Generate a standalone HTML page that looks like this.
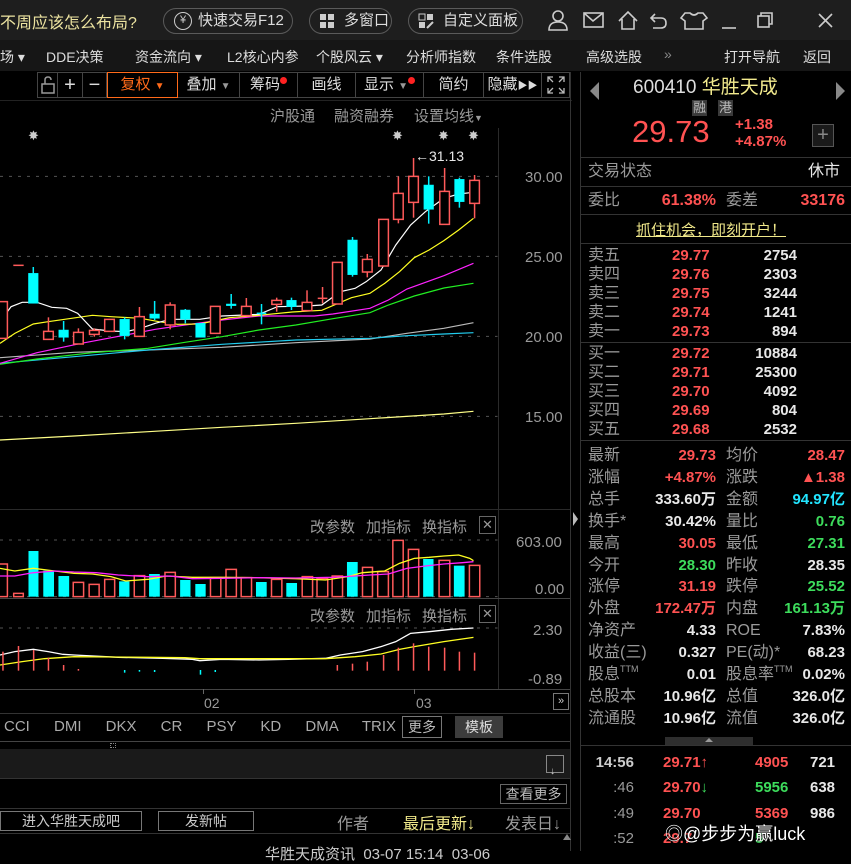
<!DOCTYPE html>
<html><head><meta charset="utf-8"><style>
*{margin:0;padding:0;box-sizing:border-box}
body{width:851px;height:851px;background:#000;overflow:hidden;position:relative;font-family:"Liberation Sans","Noto Sans CJK SC",sans-serif;color:#ddd;font-size:15px}
.a{position:absolute;white-space:nowrap}
.g{color:#9a9a9a}
.r{color:#ff5252}
.gr{color:#3ddc5c}
.w{color:#e8e8e8}
.b{font-weight:bold}
.pill{position:absolute;top:8px;height:26px;border:1px solid #5a5a5a;border-radius:13px;color:#ddd;font-size:15px;line-height:24px;padding-left:34px}
.tb{position:absolute;top:72px;height:26px;border:1px solid #444;border-left:none;color:#ddd;font-size:15px;line-height:24px;text-align:center}
.hl{position:absolute;height:1px;background:#333}
.lab{position:absolute;color:#9a9a9a;font-size:16px;line-height:20px}
.val{position:absolute;font-weight:bold;font-size:16px;line-height:20px;text-align:right}
.ttm{font-size:9px;line-height:0;position:relative;top:-7px}
</style></head><body>
<!-- top bar -->
<div class="a" style="left:0;top:0;width:851px;height:40px;background:#1e1e1e"></div>
<div class="a" style="left:0;top:9px;font-size:16px;color:#ece3a0">不周应该怎么布局?</div>
<div class="pill" style="left:163px;width:130px">快速交易F12</div>
<div class="a" style="left:174px;top:12px;width:18px;height:18px;border:1.5px solid #ccc;border-radius:50%;font-size:11px;line-height:15px;text-align:center;color:#ccc">¥</div>
<div class="pill" style="left:309px;width:83px">多窗口</div>
<svg class="a" style="left:319px;top:13px" width="17" height="16"><rect x="1" y="1" width="6" height="6" fill="#ccc"/><rect x="9" y="1" width="6" height="6" fill="#ccc"/><rect x="1" y="9" width="6" height="6" fill="#ccc"/><rect x="9" y="9" width="6" height="6" fill="#ccc"/></svg>
<div class="pill" style="left:408px;width:115px">自定义面板</div>
<svg class="a" style="left:418px;top:13px" width="17" height="16"><rect x="1" y="1" width="6" height="6" fill="none" stroke="#ccc"/><rect x="9" y="1" width="6" height="6" fill="#ccc"/><rect x="1" y="9" width="6" height="6" fill="#ccc"/><path d="M9 15 L15 9" stroke="#ccc" stroke-width="2"/></svg>
<svg class="a" style="left:545px;top:8px" width="300" height="26" fill="none" stroke="#ccc" stroke-width="1.6">
<circle cx="13" cy="8" r="5"/><path d="M4 22 Q4 14 13 14 Q22 14 22 22 Z"/>
<rect x="39" y="5" width="19" height="14"/><path d="M39 5 L48 13 L58 5"/>
<path d="M74 13 L83 4 L92 13 M77 11 V21 H89 V11"/>
<path d="M110 6 L106 10 L110 14 M106 10 H116 Q121 10 121 15 Q121 20 116 20 H108"/>
<path d="M140 5 L145 5 Q149 9 153 5 L158 5 L162 10 L158 13 V21 H140 V13 L136 10 Z"/>
<path d="M177 20 H191"/>
<rect x="213" y="8" width="11" height="11"/><path d="M216 8 V5 H227 V16 H224"/>
<path d="M274 6 L287 19 M287 6 L274 19"/>
</svg>
<!-- menu row -->
<div class="a" style="left:0;top:40px;width:851px;height:31px;background:#161616"></div>
<div class="a" style="left:0;top:47px;font-size:14px;color:#ddd">场 ▾</div>
<div class="a" style="left:46px;top:47px;font-size:14px">DDE决策</div>
<div class="a" style="left:135px;top:47px;font-size:14px">资金流向 ▾</div>
<div class="a" style="left:227px;top:47px;font-size:14px">L2核心内参</div>
<div class="a" style="left:316px;top:47px;font-size:14px">个股风云 ▾</div>
<div class="a" style="left:406px;top:47px;font-size:14px">分析师指数</div>
<div class="a" style="left:496px;top:47px;font-size:14px">条件选股</div>
<div class="a" style="left:586px;top:47px;font-size:14px">高级选股</div>
<div class="a" style="left:664px;top:46px;font-size:14px;color:#888">»</div>
<div class="a" style="left:724px;top:47px;font-size:14px">打开导航</div>
<div class="a" style="left:803px;top:47px;font-size:14px">返回</div>
<!-- toolbar -->
<div class="tb" style="left:37px;width:21px;border-left:1px solid #444"><svg width="16" height="20" style="margin-top:2px" fill="none" stroke="#999" stroke-width="1.5"><rect x="2" y="9" width="12" height="9"/><path d="M5 9 V5 Q5 2 8 2 Q11 2 11 5"/></svg></div>
<div class="tb" style="left:58px;width:25px;font-size:20px">+</div>
<div class="tb" style="left:83px;width:24px;font-size:20px">−</div>
<div class="tb" style="left:107px;width:71px;border:1px solid #ff6a1a;color:#ff6a1a">复权 <span style="font-size:10px">▼</span></div>
<div class="tb" style="left:178px;width:62px">叠加 <span style="font-size:10px;color:#999">▼</span></div>
<div class="tb" style="left:240px;width:58px">筹码<span style="display:inline-block;width:7px;height:7px;border-radius:50%;background:#f22;vertical-align:top;margin-top:4px"></span></div>
<div class="tb" style="left:298px;width:58px">画线</div>
<div class="tb" style="left:356px;width:68px">显示 <span style="font-size:10px;color:#999">▼</span><span style="display:inline-block;width:7px;height:7px;border-radius:50%;background:#f22;vertical-align:top;margin-top:4px"></span></div>
<div class="tb" style="left:424px;width:60px">简约</div>
<div class="tb" style="left:484px;width:58px">隐藏<span style="font-size:10px">▶▶</span></div>
<div class="tb" style="left:542px;width:28px"><svg width="18" height="18" style="margin-top:3px" fill="none" stroke="#bbb" stroke-width="1.3"><path d="M1 6 V1 H6 M12 1 H17 V6 M17 12 V17 H12 M6 17 H1 V12 M1 1 L6 6 M17 1 L12 6 M17 17 L12 12 M1 17 L6 12"/></svg></div>
<div class="hl" style="left:0;top:100px;width:572px;background:#222"></div>
<div class="a g" style="left:270px;top:105px;font-size:15px">沪股通</div>
<div class="a g" style="left:334px;top:105px;font-size:15px">融资融券</div>
<div class="a g" style="left:414px;top:105px;font-size:15px">设置均线<span style="font-size:9px">▼</span></div>
<!-- separators -->
<div class="a" style="left:498px;top:128px;width:1px;height:562px;background:#2a2a2a"></div>
<div class="a" style="left:570px;top:72px;width:1px;height:779px;background:#333"></div>
<div class="a" style="left:580px;top:72px;width:1px;height:779px;background:#333"></div>
<div class="a" style="left:573px;top:512px;width:0;height:0;border-left:5px solid #bbb;border-top:7px solid transparent;border-bottom:7px solid transparent"></div>
<!-- price axis labels -->
<div class="a g" style="left:525px;top:169px;font-size:15px">30.00</div>
<div class="a g" style="left:525px;top:249px;font-size:15px">25.00</div>
<div class="a g" style="left:525px;top:329px;font-size:15px">20.00</div>
<div class="a g" style="left:525px;top:409px;font-size:15px">15.00</div>
<!-- main chart -->
<svg class="a" style="left:0;top:130px" width="580" height="320" viewBox="0 0 1568 960" preserveAspectRatio="none">
<g stroke="#555" stroke-dasharray="3,6"><line x1="0" y1="139" x2="1345" y2="139" vector-effect="non-scaling-stroke"/><line x1="0" y1="379" x2="1345" y2="379" vector-effect="non-scaling-stroke"/><line x1="0" y1="619" x2="1345" y2="619" vector-effect="non-scaling-stroke"/><line x1="0" y1="859" x2="1345" y2="859" vector-effect="non-scaling-stroke"/></g>
<g fill="none" stroke-width="1.2">
<polyline vector-effect="non-scaling-stroke" stroke="#ffff88" points="0,930 200,918 400,905 600,892 800,880 1000,866 1200,852 1280,844"/>
<polyline vector-effect="non-scaling-stroke" stroke="#bbb" points="0,683 200,667 400,660 600,652 800,638 1000,627 1100,610 1200,595 1280,578"/>
<polyline vector-effect="non-scaling-stroke" stroke="#22ccee" points="0,700 200,680 400,660 600,643 800,630 1000,625 1100,617 1200,612 1280,608"/>
<polyline vector-effect="non-scaling-stroke" stroke="#22ee22" points="0,703 100,687 250,668 400,655 500,637 600,620 700,600 800,585 900,566 1000,548 1050,525 1120,498 1200,474 1280,460"/>
<polyline vector-effect="non-scaling-stroke" stroke="#ff22ff" points="0,700 100,668 220,640 330,617 420,598 500,585 600,570 700,558 850,558 900,552 1000,535 1050,510 1100,477 1200,437 1280,400"/>
<polyline vector-effect="non-scaling-stroke" stroke="#ffff22" points="0,640 40,610 90,582 130,575 250,556 300,560 380,565 430,575 480,583 540,582 620,563 700,556 790,546 870,541 950,503 1000,490 1040,460 1080,425 1120,383 1160,360 1200,332 1240,300 1280,265"/>
<polyline vector-effect="non-scaling-stroke" stroke="#fff" points="0,575 30,530 60,517 100,517 140,532 180,535 210,550 250,597 300,603 340,605 380,595 420,580 460,568 540,568 600,558 700,553 750,530 830,528 870,525 920,485 960,475 990,455 1030,420 1070,345 1110,285 1150,245 1200,205 1240,192 1280,187"/>
</g>
<g stroke="#ff5a5a" fill="#000" stroke-width="1.5">
<rect vector-effect="non-scaling-stroke" x="-6" y="515" width="26" height="110"/>
<line vector-effect="non-scaling-stroke" x1="36" y1="406" x2="64" y2="406"/>
<line vector-effect="non-scaling-stroke" x1="131" y1="562" x2="131" y2="604"/><rect vector-effect="non-scaling-stroke" x="118" y="604" width="26" height="24"/>
<line vector-effect="non-scaling-stroke" x1="212" y1="595" x2="212" y2="607"/><rect vector-effect="non-scaling-stroke" x="199" y="607" width="26" height="35"/>
<line vector-effect="non-scaling-stroke" x1="255" y1="595" x2="255" y2="620"/><rect vector-effect="non-scaling-stroke" x="242" y="601" width="26" height="12"/>
<rect vector-effect="non-scaling-stroke" x="283" y="568" width="26" height="36"/>
<line vector-effect="non-scaling-stroke" x1="377" y1="531" x2="377" y2="560"/><rect vector-effect="non-scaling-stroke" x="364" y="560" width="26" height="59"/>
<line vector-effect="non-scaling-stroke" x1="460" y1="517" x2="460" y2="598"/><rect vector-effect="non-scaling-stroke" x="447" y="525" width="26" height="60"/>
<rect vector-effect="non-scaling-stroke" x="569" y="529" width="26" height="81"/>
<line vector-effect="non-scaling-stroke" x1="666" y1="504" x2="666" y2="529"/><rect vector-effect="non-scaling-stroke" x="653" y="529" width="26" height="28"/>
<line vector-effect="non-scaling-stroke" x1="748" y1="503" x2="748" y2="545"/><rect vector-effect="non-scaling-stroke" x="735" y="511" width="26" height="12"/>
<line vector-effect="non-scaling-stroke" x1="830" y1="481" x2="830" y2="517"/><rect vector-effect="non-scaling-stroke" x="817" y="517" width="26" height="25"/>
<line vector-effect="non-scaling-stroke" x1="872" y1="471" x2="872" y2="520"/><line vector-effect="non-scaling-stroke" x1="859" y1="505" x2="885" y2="505"/>
<rect vector-effect="non-scaling-stroke" x="899" y="397" width="26" height="125"/>
<line vector-effect="non-scaling-stroke" x1="993" y1="372" x2="993" y2="442"/><rect vector-effect="non-scaling-stroke" x="980" y="388" width="26" height="38"/>
<rect vector-effect="non-scaling-stroke" x="1024" y="268" width="26" height="140"/>
<line vector-effect="non-scaling-stroke" x1="1077" y1="139" x2="1077" y2="280"/><rect vector-effect="non-scaling-stroke" x="1064" y="190" width="26" height="78"/>
<line vector-effect="non-scaling-stroke" x1="1118" y1="84" x2="1118" y2="263"/><rect vector-effect="non-scaling-stroke" x="1105" y="139" width="26" height="78"/>
<line vector-effect="non-scaling-stroke" x1="1202" y1="114" x2="1202" y2="283"/><rect vector-effect="non-scaling-stroke" x="1189" y="184" width="26" height="99"/>
<line vector-effect="non-scaling-stroke" x1="1283" y1="135" x2="1283" y2="265"/><rect vector-effect="non-scaling-stroke" x="1270" y="151" width="26" height="69"/>
</g>
<g stroke="#00f0ff" fill="#00ffff" stroke-width="1.5">
<line vector-effect="non-scaling-stroke" x1="90" y1="411" x2="90" y2="520"/><rect x="77" y="430" width="26" height="90"/>
<line vector-effect="non-scaling-stroke" x1="172" y1="573" x2="172" y2="635"/><rect x="159" y="600" width="26" height="22"/>
<line vector-effect="non-scaling-stroke" x1="337" y1="562" x2="337" y2="628"/><rect x="324" y="568" width="26" height="49"/>
<line vector-effect="non-scaling-stroke" x1="418" y1="513" x2="418" y2="570"/><rect x="405" y="552" width="26" height="13"/>
<line vector-effect="non-scaling-stroke" x1="501" y1="537" x2="501" y2="580"/><rect x="488" y="540" width="26" height="28"/>
<rect x="529" y="580" width="26" height="42"/>
<line vector-effect="non-scaling-stroke" x1="625" y1="492" x2="625" y2="536"/><rect x="612" y="522" width="26" height="5"/>
<line vector-effect="non-scaling-stroke" x1="707" y1="522" x2="707" y2="583"/><line vector-effect="non-scaling-stroke" x1="694" y1="550" x2="720" y2="550"/>
<line vector-effect="non-scaling-stroke" x1="788" y1="503" x2="788" y2="540"/><rect x="775" y="511" width="26" height="19"/>
<line vector-effect="non-scaling-stroke" x1="953" y1="321" x2="953" y2="440"/><rect x="940" y="330" width="26" height="104"/>
<line vector-effect="non-scaling-stroke" x1="1159" y1="139" x2="1159" y2="281"/><rect x="1146" y="165" width="26" height="73"/>
<line vector-effect="non-scaling-stroke" x1="1242" y1="143" x2="1242" y2="233"/><rect x="1229" y="148" width="26" height="67"/>
</g>
</svg>
<div class="a" style="left:28px;top:128px;color:#ccc;font-size:13px">✸</div>
<div class="a" style="left:392px;top:128px;color:#ccc;font-size:13px">✸</div>
<div class="a" style="left:438px;top:128px;color:#ccc;font-size:13px">✸</div>
<div class="a" style="left:468px;top:128px;color:#ccc;font-size:13px">✸</div>
<div class="a w" style="left:415px;top:148px;font-size:14px">←31.13</div>
<!-- volume -->
<div class="hl" style="left:0;top:509px;width:570px;background:#2a2a2a"></div>
<div class="a g" style="left:310px;top:516px;font-size:15px">改参数</div>
<div class="a g" style="left:366px;top:516px;font-size:15px">加指标</div>
<div class="a g" style="left:422px;top:516px;font-size:15px">换指标</div>
<div class="a" style="left:479px;top:516px;width:17px;height:18px;border:1px solid #666;color:#999;font-size:13px;line-height:16px;text-align:center">✕</div>
<div class="a g" style="left:516px;top:534px;font-size:15px">603.00</div>
<div class="a g" style="left:535px;top:581px;font-size:15px">0.00</div>
<div class="hl" style="left:0;top:598px;width:570px;background:#444"></div>
<div class="a g" style="left:310px;top:605px;font-size:15px">改参数</div>
<div class="a g" style="left:366px;top:605px;font-size:15px">加指标</div>
<div class="a g" style="left:422px;top:605px;font-size:15px">换指标</div>
<div class="a" style="left:479px;top:605px;width:17px;height:18px;border:1px solid #666;color:#999;font-size:13px;line-height:16px;text-align:center">✕</div>
<div class="a g" style="left:533px;top:622px;font-size:15px">2.30</div>
<div class="a g" style="left:528px;top:671px;font-size:15px">-0.89</div>
<svg class="a" style="left:0;top:500px" width="580" height="200" viewBox="0 0 1568 600" preserveAspectRatio="none">
<g stroke="#555" stroke-dasharray="3,6"><line vector-effect="non-scaling-stroke" x1="0" y1="120" x2="1345" y2="120"/><line vector-effect="non-scaling-stroke" x1="0" y1="290" x2="1345" y2="290"/><line vector-effect="non-scaling-stroke" x1="0" y1="384" x2="1345" y2="384"/></g>
<g fill="#000" stroke="#ff5a5a" stroke-width="1.5">
<rect vector-effect="non-scaling-stroke" x="-5" y="192" width="25" height="98"/>
<rect vector-effect="non-scaling-stroke" x="37" y="280" width="26" height="10"/>
<rect vector-effect="non-scaling-stroke" x="198" y="247" width="28" height="43"/>
<rect vector-effect="non-scaling-stroke" x="241" y="253" width="27" height="37"/>
<rect vector-effect="non-scaling-stroke" x="283" y="238" width="27" height="52"/>
<rect vector-effect="non-scaling-stroke" x="363" y="227" width="28" height="63"/>
<rect vector-effect="non-scaling-stroke" x="446" y="217" width="28" height="73"/>
<rect vector-effect="non-scaling-stroke" x="569" y="233" width="28" height="57"/>
<rect vector-effect="non-scaling-stroke" x="611" y="208" width="28" height="82"/>
<rect vector-effect="non-scaling-stroke" x="652" y="233" width="28" height="57"/>
<rect vector-effect="non-scaling-stroke" x="734" y="238" width="28" height="52"/>
<rect vector-effect="non-scaling-stroke" x="817" y="230" width="28" height="60"/>
<rect vector-effect="non-scaling-stroke" x="857" y="236" width="29" height="54"/>
<rect vector-effect="non-scaling-stroke" x="898" y="228" width="28" height="62"/>
<rect vector-effect="non-scaling-stroke" x="980" y="202" width="27" height="88"/>
<rect vector-effect="non-scaling-stroke" x="1021" y="215" width="29" height="75"/>
<rect vector-effect="non-scaling-stroke" x="1062" y="121" width="28" height="169"/>
<rect vector-effect="non-scaling-stroke" x="1104" y="148" width="28" height="142"/>
<rect vector-effect="non-scaling-stroke" x="1187" y="181" width="29" height="109"/>
<rect vector-effect="non-scaling-stroke" x="1269" y="196" width="28" height="94"/>
</g>
<g fill="#00ffff">
<rect x="77" y="153" width="27" height="137"/><rect x="117" y="212" width="29" height="78"/><rect x="158" y="228" width="29" height="62"/>
<rect x="322" y="244" width="28" height="46"/><rect x="403" y="222" width="29" height="68"/><rect x="487" y="240" width="28" height="50"/>
<rect x="528" y="252" width="28" height="38"/><rect x="692" y="246" width="29" height="44"/><rect x="774" y="249" width="29" height="41"/>
<rect x="938" y="186" width="29" height="104"/><rect x="1144" y="177" width="28" height="113"/><rect x="1227" y="197" width="29" height="93"/>
</g>
<g fill="none" stroke-width="1.3">
<polyline vector-effect="non-scaling-stroke" stroke="#ffff22" points="0,205 40,213 90,205 140,212 200,220 250,222 300,230 340,243 400,238 450,228 520,232 600,232 700,233 800,236 880,240 940,230 980,218 1040,213 1080,190 1120,175 1160,172 1200,168 1240,165 1270,175 1280,182"/>
<polyline vector-effect="non-scaling-stroke" stroke="#ff22ff" points="0,228 40,228 90,218 150,213 200,216 260,218 320,225 400,230 460,228 520,236 600,235 700,233 800,234 900,232 960,228 1000,225 1050,222 1100,205 1150,198 1200,192 1250,188 1280,185"/>
<polyline vector-effect="non-scaling-stroke" stroke="#fff" points="0,465 40,455 90,448 130,455 170,463 200,465 320,472 440,475 520,478 540,482 600,478 700,480 780,478 880,475 920,465 980,455 1030,440 1070,425 1110,400 1160,395 1220,388 1280,384"/>
<polyline vector-effect="non-scaling-stroke" stroke="#ffff22" points="0,495 60,485 120,476 200,470 300,471 400,472 500,473 540,476 700,476 880,476 960,470 1030,462 1080,448 1120,440 1200,425 1280,412"/>
</g>
<g stroke="#ff5a5a" stroke-width="1.5">
<line vector-effect="non-scaling-stroke" x1="8" y1="455" x2="8" y2="512"/><line vector-effect="non-scaling-stroke" x1="50" y1="438" x2="50" y2="512"/><line vector-effect="non-scaling-stroke" x1="91" y1="450" x2="91" y2="512"/><line vector-effect="non-scaling-stroke" x1="131" y1="473" x2="131" y2="512"/><line vector-effect="non-scaling-stroke" x1="172" y1="495" x2="172" y2="512"/><line vector-effect="non-scaling-stroke" x1="212" y1="507" x2="212" y2="512"/>
<line vector-effect="non-scaling-stroke" x1="912" y1="495" x2="912" y2="512"/><line vector-effect="non-scaling-stroke" x1="953" y1="491" x2="953" y2="512"/><line vector-effect="non-scaling-stroke" x1="993" y1="485" x2="993" y2="512"/><line vector-effect="non-scaling-stroke" x1="1037" y1="465" x2="1037" y2="512"/><line vector-effect="non-scaling-stroke" x1="1077" y1="443" x2="1077" y2="512"/><line vector-effect="non-scaling-stroke" x1="1118" y1="430" x2="1118" y2="512"/><line vector-effect="non-scaling-stroke" x1="1159" y1="440" x2="1159" y2="512"/><line vector-effect="non-scaling-stroke" x1="1202" y1="443" x2="1202" y2="512"/><line vector-effect="non-scaling-stroke" x1="1242" y1="455" x2="1242" y2="512"/><line vector-effect="non-scaling-stroke" x1="1283" y1="458" x2="1283" y2="512"/>
</g>
<g stroke="#00ffff" stroke-width="1.5"><line vector-effect="non-scaling-stroke" x1="337" y1="510" x2="337" y2="518"/><line vector-effect="non-scaling-stroke" x1="377" y1="510" x2="377" y2="515"/><line vector-effect="non-scaling-stroke" x1="418" y1="510" x2="418" y2="516"/><line vector-effect="non-scaling-stroke" x1="542" y1="510" x2="542" y2="524"/><line vector-effect="non-scaling-stroke" x1="582" y1="510" x2="582" y2="516"/></g>
</svg>
<div class="hl" style="left:0;top:689px;width:570px;background:#444"></div>
<div class="a" style="left:203px;top:689px;width:1px;height:5px;background:#666"></div>
<div class="a" style="left:414px;top:689px;width:1px;height:5px;background:#666"></div>
<div class="a g" style="left:204px;top:695px;font-size:14px">02</div>
<div class="a g" style="left:416px;top:695px;font-size:14px">03</div>
<div class="a" style="left:553px;top:693px;width:16px;height:17px;border:1px solid #777;color:#ccc;font-size:11px;line-height:14px;text-align:center">»</div>
<div class="hl" style="left:0;top:713px;width:570px;background:#333"></div>
<!-- indicator tabs -->
<div class="a g" style="left:4px;top:718px;font-size:15px;color:#aaa;word-spacing:20px">CCI DMI DKX CR PSY KD DMA TRIX</div>
<div class="a" style="left:402px;top:716px;width:40px;height:22px;border:1px solid #777;color:#bbb;font-size:14px;line-height:20px;text-align:center">更多</div>
<div class="a" style="left:455px;top:716px;width:48px;height:22px;background:#3c3c3c;color:#ddd;font-size:14px;line-height:22px;text-align:center">模板</div>
<div class="hl" style="left:0;top:741px;width:570px;background:#444"></div>
<div class="a" style="left:110px;top:743px;width:6px;height:5px;border:1px dotted #888"></div>
<div class="a" style="left:0;top:749px;width:570px;height:29px;background:#1a1a1a"></div>
<div class="a" style="left:546px;top:755px;width:18px;height:18px;border:1px solid #888"></div>
<div class="a" style="left:550px;top:766px;color:#ccc;font-size:10px">↓</div>
<div class="hl" style="left:0;top:778px;width:570px;background:#333"></div>
<div class="a" style="left:500px;top:784px;width:67px;height:20px;border:1px solid #666;color:#bbb;font-size:14px;line-height:18px;text-align:center">查看更多</div>
<div class="hl" style="left:0;top:808px;width:570px;background:#333"></div>
<div class="a" style="left:0;top:811px;width:142px;height:20px;border:1px solid #777;color:#ccc;font-size:14px;line-height:18px;text-align:center">进入华胜天成吧</div>
<div class="a" style="left:158px;top:811px;width:96px;height:20px;border:1px solid #777;color:#ccc;font-size:14px;line-height:18px;text-align:center">发新帖</div>
<div class="a g" style="left:337px;top:810px;font-size:16px">作者</div>
<div class="a" style="left:403px;top:810px;font-size:16px;color:#f0e88a">最后更新↓</div>
<div class="a g" style="left:505px;top:810px;font-size:16px">发表日↓</div>
<div class="hl" style="left:0;top:833px;width:570px;background:#333"></div>
<div class="a" style="left:265px;top:843px;font-size:15px;color:#ccc">华胜天成资讯&nbsp; 03-07 15:14&nbsp; 03-06</div>
<div class="a" style="left:563px;top:834px;width:0;height:0;border-bottom:6px solid #888;border-left:4px solid transparent;border-right:4px solid transparent"></div>
<!-- right panel -->
<div class="a" style="left:590px;top:82px;width:0;height:0;border-right:9px solid #888;border-top:9px solid transparent;border-bottom:9px solid transparent"></div>
<div class="a" style="left:836px;top:82px;width:0;height:0;border-left:9px solid #888;border-top:9px solid transparent;border-bottom:9px solid transparent"></div>
<div class="a" style="left:633px;top:72px;font-size:19px;color:#ddd">600410 <span style="color:#f3eb8e">华胜天成</span></div>
<div class="a" style="left:692px;top:100px;width:15px;height:16px;background:#3a3a3a;color:#bbb;font-size:13px;line-height:16px;text-align:center">融</div>
<div class="a" style="left:718px;top:100px;width:15px;height:16px;background:#3a3a3a;color:#bbb;font-size:13px;line-height:16px;text-align:center">港</div>
<div class="a r" style="left:632px;top:114px;font-size:31px">29.73</div>
<div class="a r b" style="left:735px;top:116px;font-size:15px;line-height:17px">+1.38<br>+4.87%</div>
<div class="a" style="left:812px;top:124px;width:22px;height:23px;border:1px solid #555;background:#1a1a1a;color:#888;font-size:20px;line-height:20px;text-align:center">+</div>
<div class="hl" style="left:581px;top:157px;width:270px"></div>
<div class="lab" style="left:588px;top:162px">交易状态</div>
<div class="a w" style="left:808px;top:162px;font-size:16px;line-height:20px">休市</div>
<div class="hl" style="left:581px;top:186px;width:270px"></div>
<div class="lab" style="left:588px;top:191px">委比</div>
<div class="val r" style="left:640px;top:191px;width:76px">61.38%</div>
<div class="lab" style="left:726px;top:191px">委差</div>
<div class="val r" style="left:780px;top:191px;width:65px">33176</div>
<div class="hl" style="left:581px;top:214px;width:270px"></div>
<div class="a" style="left:636px;top:219px;font-size:15px;color:#f0e88a;text-decoration:underline">抓住机会，即刻开户！</div>
<div class="hl" style="left:581px;top:243px;width:270px"></div>
<div class="a" style="left:588px;top:246px;color:#9a9a9a;font-size:16px;line-height:19px">卖五<br>卖四<br>卖三<br>卖二<br>卖一</div>
<div class="a r b" style="left:672px;top:246px;font-size:15px;line-height:19px">29.77<br>29.76<br>29.75<br>29.74<br>29.73</div>
<div class="a w b" style="left:730px;top:246px;width:67px;text-align:right;font-size:15px;line-height:19px">2754<br>2303<br>3244<br>1241<br>894</div>
<div class="hl" style="left:581px;top:342px;width:270px"></div>
<div class="a" style="left:588px;top:344px;color:#9a9a9a;font-size:16px;line-height:19px">买一<br>买二<br>买三<br>买四<br>买五</div>
<div class="a r b" style="left:672px;top:344px;font-size:15px;line-height:19px">29.72<br>29.71<br>29.70<br>29.69<br>29.68</div>
<div class="a w b" style="left:730px;top:344px;width:67px;text-align:right;font-size:15px;line-height:19px">10884<br>25300<br>4092<br>804<br>2532</div>
<div class="hl" style="left:581px;top:440px;width:270px"></div>
<div class="a" style="left:588px;top:445px;color:#9a9a9a;font-size:16px;line-height:21.9px">最新<br>涨幅<br>总手<br>换手*<br>最高<br>今开<br>涨停<br>外盘<br>净资产<br>收益(三)<br>股息<span class="ttm">TTM</span><br>总股本<br>流通股</div>
<div class="a" style="left:640px;top:445px;width:76px;text-align:right;font-weight:bold;font-size:15px;line-height:21.9px"><span class="r">29.73</span><br><span class="r">+4.87%</span><br><span class="w">333.60万</span><br><span class="w">30.42%</span><br><span class="r">30.05</span><br><span class="gr">28.30</span><br><span class="r">31.19</span><br><span class="r">172.47万</span><br><span class="w">4.33</span><br><span class="w">0.327</span><br><span class="w">0.01</span><br><span class="w">10.96亿</span><br><span class="w">10.96亿</span></div>
<div class="a" style="left:726px;top:445px;color:#9a9a9a;font-size:16px;line-height:21.9px">均价<br>涨跌<br>金额<br>量比<br>最低<br>昨收<br>跌停<br>内盘<br>ROE<br>PE(动)*<br>股息率<span class="ttm">TTM</span><br>总值<br>流值</div>
<div class="a" style="left:760px;top:445px;width:85px;text-align:right;font-weight:bold;font-size:15px;line-height:21.9px"><span class="r">28.47</span><br><span class="r">▲1.38</span><br><span style="color:#22e5ff">94.97亿</span><br><span class="gr">0.76</span><br><span class="gr">27.31</span><br><span class="w">28.35</span><br><span class="gr">25.52</span><br><span class="gr">161.13万</span><br><span class="w">7.83%</span><br><span class="w">68.23</span><br><span class="w">0.02%</span><br><span class="w">326.0亿</span><br><span class="w">326.0亿</span></div>
<div class="a" style="left:665px;top:737px;width:88px;height:8px;background:#2e2e2e"></div>
<div class="a" style="left:705px;top:738px;width:0;height:0;border-bottom:4px solid #999;border-left:4px solid transparent;border-right:4px solid transparent"></div>
<div class="hl" style="left:581px;top:745px;width:270px"></div>
<div class="a" style="left:588px;top:750px;width:46px;text-align:right;font-size:15px;line-height:25.3px;font-weight:bold;color:#ccc">14:56<br><span style="color:#999;font-weight:normal">:46</span><br><span style="color:#999;font-weight:normal">:49</span><br><span style="color:#999;font-weight:normal">:52</span></div>
<div class="a r b" style="left:663px;top:750px;font-size:15px;line-height:25.3px">29.71<span style="color:#ff5252">↑</span><br>29.70<span class="gr">↓</span><br>29.70<br>29.7</div>
<div class="a b" style="left:755px;top:750px;font-size:15px;line-height:25.3px"><span class="r">4905</span><br><span class="gr">5956</span><br><span class="r">5369</span><br><span class="gr">5</span></div>
<div class="a w b" style="left:810px;top:750px;font-size:15px;line-height:25.3px">721<br>638<br>986</div>
<div class="a" style="left:665px;top:820px;font-size:18px;color:#fff;text-shadow:0 0 2px #000">◎@步步为赢luck</div>
</body></html>
